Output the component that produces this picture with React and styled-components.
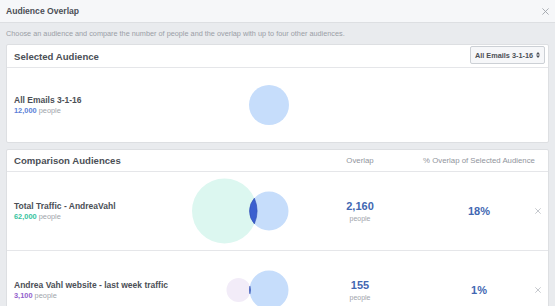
import React from 'react';
import styled, { createGlobalStyle } from 'styled-components';

const GlobalStyle = createGlobalStyle`
  html, body {
    margin: 0;
    padding: 0;
    background: #e9ebee;
    font-family: "Liberation Sans", Arial, sans-serif;
  }
`;

const BLUE_FILL = '#c6ddfb';

// lens between two circles on the same horizontal line
const lensPath = (x1, r1, x2, r2, cy) => {
  const d = x2 - x1;
  if (d >= r1 + r2) return null;
  const a = (d * d + r1 * r1 - r2 * r2) / (2 * d);
  const h = Math.sqrt(Math.max(r1 * r1 - a * a, 0));
  const ix = x1 + a;
  return `M ${ix} ${cy - h} A ${r1} ${r1} 0 0 1 ${ix} ${cy + h} A ${r2} ${r2} 0 0 1 ${ix} ${cy - h} Z`;
};

const Venn = ({ other }) => {
  const cy = 35;
  const bx = 83;
  const br = 19.5;
  const lens = other ? lensPath(other.x, other.r, bx, br, cy) : null;
  return (
    <svg width="104" height="70" viewBox="0 0 104 70">
      {other && <circle cx={other.x} cy={cy} r={other.r} fill={other.fill} />}
      <circle cx={bx} cy={cy} r={other ? br : 20} fill={BLUE_FILL} />
      {lens && <path d={lens} fill="#3b5fcf" stroke="#2d4cae" strokeWidth="0.6" />}
    </svg>
  );
};

const CloseIcon = ({ size = 7, color = '#90949c' }) => (
  <svg width={size} height={size} viewBox="0 0 10 10">
    <path d="M1 1 L9 9 M9 1 L1 9" stroke={color} strokeWidth="1.3" strokeLinecap="round" />
  </svg>
);

const SelectArrows = () => (
  <svg width="4" height="6" viewBox="0 0 4 6">
    <path d="M0 2.5 L2 0 L4 2.5 Z M0 3.5 L2 6 L4 3.5 Z" fill="#4b4f56" />
  </svg>
);

const comparisons = [
  {
    name: 'Total Traffic - AndreaVahl',
    size: '62,000',
    color: '#35c39e',
    overlap: '2,160',
    pct: '18%',
    circle: { x: 38.5, r: 32.5, fill: '#dcf7f0' },
  },
  {
    name: 'Andrea Vahl website - last week traffic',
    size: '3,100',
    color: '#9361cc',
    overlap: '155',
    pct: '1%',
    circle: { x: 52.5, r: 12, fill: '#f2ecf8' },
  },
];

const App = () => (
  <Page>
    <GlobalStyle />
    <TopBar>
      <TopTitle>Audience Overlap</TopTitle>
      <CloseIcon size={7} color="#a0a4ab" />
    </TopBar>
    <Description>
      Choose an audience and compare the number of people and the overlap with up to four other audiences.
    </Description>
    <Cards>
      <Card>
        <CardHeader $tall>
          <CardTitle>Selected Audience</CardTitle>
          <Dropdown>All Emails 3-1-16 <SelectArrows /></Dropdown>
        </CardHeader>
        <Row $height={74}>
          <NameCell>
            <Name>All Emails 3-1-16</Name>
            <Size>
              <SizeNum $color="#5b7fd8">12,000</SizeNum> people
            </Size>
          </NameCell>
          <VennCell>
            <Venn />
          </VennCell>
        </Row>
      </Card>

      <Card>
        <CardHeader>
          <CardTitle>Comparison Audiences</CardTitle>
          <span />
          <ColHead>Overlap</ColHead>
          <ColHead>% Overlap of Selected Audience</ColHead>
          <span />
        </CardHeader>
        {comparisons.map((c, i) => (
          <Row key={i} $height={78} $divider={i > 0}>
            <NameCell>
              <Name>{c.name}</Name>
              <Size>
                <SizeNum $color={c.color}>{c.size}</SizeNum> people
              </Size>
            </NameCell>
            <VennCell>
              <Venn other={c.circle} />
            </VennCell>
            <Stat>
              <BigNum>{c.overlap}</BigNum>
              <People>people</People>
            </Stat>
            <Stat>
              <BigNum>{c.pct}</BigNum>
            </Stat>
            <RemoveCell>
              <CloseIcon size={6} color="#b4b8bf" />
            </RemoveCell>
          </Row>
        ))}
      </Card>
    </Cards>
  </Page>
);

export default App;

const Page = styled.div`
  width: 555px;
  height: 306px;
  overflow: hidden;
  background: #e9ebee;
`;

const TopBar = styled.div`
  height: 22px;
  padding: 0 6px;
  display: flex;
  align-items: center;
  justify-content: space-between;
  background: #f6f7f9;
  border-bottom: 1px solid #dddfe2;
`;

const TopTitle = styled.div`
  font-size: 8.6px;
  font-weight: bold;
  color: #4b4f56;
`;

const Description = styled.div`
  height: 21px;
  padding: 0 6px;
  display: flex;
  align-items: center;
  font-size: 7.3px;
  color: #9a9ea6;
  white-space: nowrap;
`;

const Cards = styled.div`
  display: flex;
  flex-direction: column;
  gap: 6px;
  padding: 0 6px;
`;

const Card = styled.div`
  background: #fff;
  border: 1px solid #dddfe2;
  border-radius: 2px;
`;

const columns = '172px 104px 140px 98px 20px';

const CardHeader = styled.div`
  height: ${p => (p.$tall ? 22 : 21)}px;
  padding: 0 3px 0 7px;
  display: ${p => (p.$tall ? 'flex' : 'grid')};
  grid-template-columns: ${columns};
  justify-content: space-between;
  align-items: center;
  border-bottom: 1px solid #e5e6e9;
`;

const CardTitle = styled.div`
  font-size: 9.6px;
  font-weight: bold;
  color: #4b4f56;
`;

const ColHead = styled.div`
  font-size: 7.8px;
  color: #90949c;
  text-align: center;
  white-space: nowrap;
  display: flex;
  justify-content: center;
`;

const Dropdown = styled.div`
  height: 16px;
  padding: 0 4px;
  display: flex;
  align-items: center;
  gap: 3px;
  font-size: 7.3px;
  font-weight: bold;
  color: #4b4f56;
  background: #f6f7f9;
  border: 1px solid #ccd0d5;
  border-radius: 2px;
  margin-top: -2px;
`;

const Row = styled.div`
  height: ${p => p.$height}px;
  padding-left: 7px;
  display: grid;
  grid-template-columns: ${columns};
  align-items: center;
  border-top: ${p => (p.$divider ? '1px solid #e5e6e9' : 'none')};
`;

const NameCell = styled.div`
  display: flex;
  flex-direction: column;
  gap: 1px;
  white-space: nowrap;
`;

const Name = styled.div`
  font-size: 8.5px;
  font-weight: bold;
  color: #4b4f56;
`;

const Size = styled.div`
  font-size: 7.4px;
  color: #a0a4ab;
`;

const SizeNum = styled.span`
  font-weight: bold;
  color: ${p => p.$color};
`;

const VennCell = styled.div`
  display: flex;
  align-items: center;
`;

const Stat = styled.div`
  display: flex;
  flex-direction: column;
  align-items: center;
  gap: 3px;
`;

const BigNum = styled.div`
  font-size: 11px;
  font-weight: bold;
  color: #4267b2;
`;

const People = styled.div`
  font-size: 7px;
  color: #a0a4ab;
`;

const RemoveCell = styled.div`
  display: flex;
  justify-content: center;
  align-items: center;
`;
